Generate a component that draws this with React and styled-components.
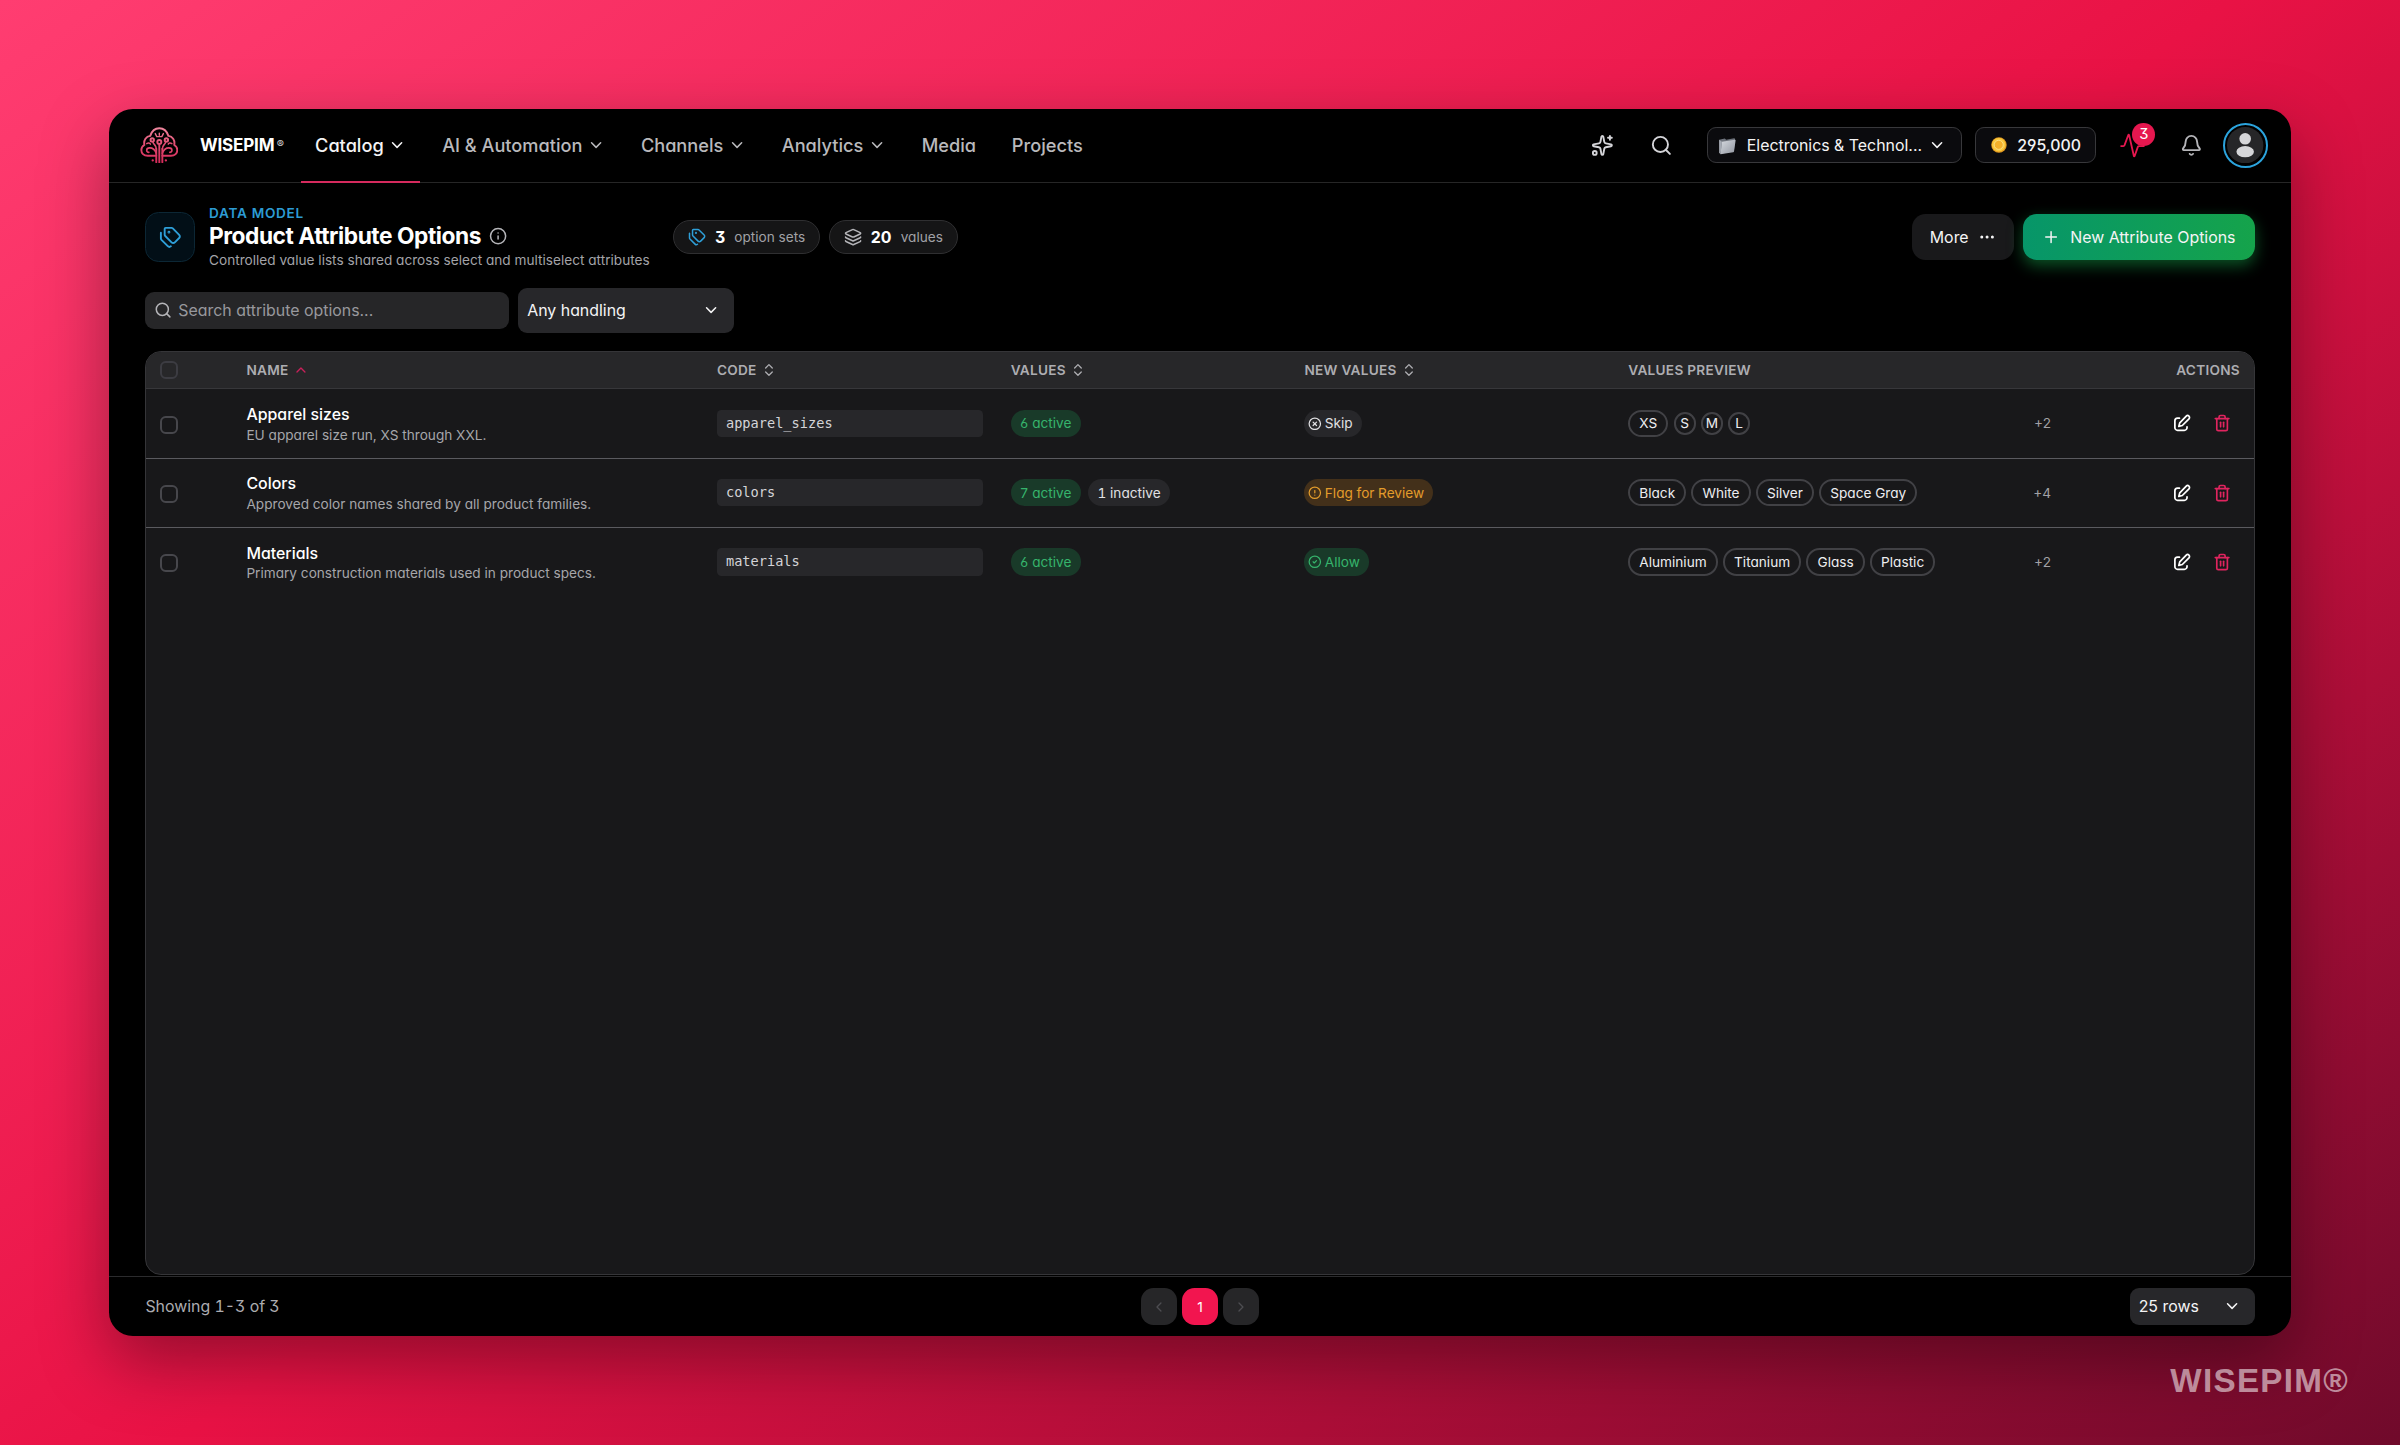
import React from "react";
import styled, { createGlobalStyle, css } from "styled-components";
import {
  Bell,
  ChevronDown,
  ChevronLeft,
  ChevronRight,
  ChevronUp,
  ChevronsUpDown,
  CircleAlert,
  CircleCheck,
  CircleX,
  Ellipsis,
  Info,
  Layers,
  Plus,
  Search,
  Sparkles,
  Tags,
  Trash2,
} from "lucide-react";

const GlobalStyle = createGlobalStyle`
  *, *::before, *::after { box-sizing: border-box; }
  body {
    margin: 0;
    font-family: Inter, "Liberation Sans", sans-serif;
    font-feature-settings: "cv03", "cv04", "cv09", "cv11";
    -webkit-font-smoothing: antialiased;
  }
`;

const sans = css`
  font-family: inherit;
  font-feature-settings: inherit;
`;

const Backdrop = styled.div`
  position: relative;
  display: flex;
  align-items: center;
  justify-content: center;
  width: 100vw;
  height: 100vh;
  overflow: hidden;
  background: linear-gradient(145deg, #ff3d71 0%, #e91245 50%, #700a2b 100%);
`;

const Window = styled.div`
  zoom: 1.1364;
  display: flex;
  flex-direction: column;
  width: 1920px;
  height: 1080px;
  border-radius: 21px;
  overflow: hidden;
  background: #000;
  color: #fafafa;
  box-shadow: 0 22px 60px rgba(0, 0, 0, 0.36);
`;

const Watermark = styled.div`
  position: absolute;
  right: 51px;
  bottom: 45px;
  font: 700 33.2px/38px "Liberation Sans", sans-serif;
  letter-spacing: 1.3px;
  color: rgba(255, 255, 255, 0.55);
`;

/* top bar */
const TopBar = styled.header`
  display: flex;
  align-items: center;
  height: 65px;
  padding: 0 20px 0 27px;
  border-bottom: 1px solid #262626;
  flex: none;
`;

const Brand = styled.div`
  display: flex;
  align-items: center;
  width: 142.3px;
  padding-bottom: 1px;
  color: #fff;
  svg { margin-right: 19px; flex: none; }
`;

const BrandName = styled.span`
  font-size: 15px;
  font-weight: 700;
  letter-spacing: -0.15px;
`;

const BrandMark = styled.span`
  margin-left: 2px;
  font-size: 9.5px;
  color: #d4d4d4;
`;

const Nav = styled.nav`
  display: flex;
  align-self: stretch;
  gap: 7.5px;
`;

const NavItem = styled.a`
  display: flex;
  align-items: center;
  gap: 4px;
  padding: 0 12px 1px;
  margin-bottom: -1px;
  border-bottom: 2px solid ${(p) => (p.$active ? "#d62a5e" : "transparent")};
  border-top: 1px solid transparent;
  font-size: 16px;
  font-weight: 450;
  color: ${(p) => (p.$active ? "#f4f4f5" : "#b9b9bc")};
`;

const TopActions = styled.div`
  display: flex;
  align-items: center;
  margin-left: auto;
`;

const IconButton = styled.button`
  ${sans}
  display: flex;
  align-items: center;
  justify-content: center;
  width: 40px;
  height: 40px;
  padding: 0;
  margin-right: ${(p) => p.$after ?? 0}px;
  border: 0;
  background: none;
  color: ${(p) => p.$tone ?? "#d4d4d8"};
  position: relative;
`;

const TopPill = styled.button`
  ${sans}
  display: flex;
  align-items: center;
  width: ${(p) => p.$width}px;
  height: 32px;
  margin-right: ${(p) => p.$after}px;
  padding: 0 ${(p) => p.$pad}px;
  gap: ${(p) => p.$gap}px;
  border: 1px solid #38383b;
  border-radius: 8px;
  background: #0b0b0e;
  color: #f4f4f5;
  font-size: 14px;
  font-weight: ${(p) => p.$weight ?? 400};
  white-space: nowrap;
  svg { flex: none; }
  svg:last-child { margin-left: -3.5px; }
  svg:first-child { margin-left: 0; }
`;

const CountBadge = styled.span`
  position: absolute;
  top: 0.5px;
  left: 15.5px;
  width: 20px;
  height: 20px;
  border-radius: 50%;
  background: #e6174f;
  color: #fff;
  font-size: 13px;
  line-height: 20px;
  text-align: center;
`;

const AvatarRing = styled.div`
  display: flex;
  align-items: center;
  justify-content: center;
  width: 40px;
  height: 40px;
  border: 2px solid #2ba3dc;
  border-radius: 50%;
`;

/* page heading */
const Page = styled.main`
  display: flex;
  flex-direction: column;
  flex: 1;
  min-height: 0;
  padding: 19.4px 32px 1px;
`;

const Heading = styled.section`
  display: flex;
  align-items: center;
  height: 57px;
`;

const HeadingIcon = styled.div`
  display: flex;
  align-items: center;
  justify-content: center;
  width: 44px;
  height: 44px;
  margin-right: 12px;
  border: 1px solid #0c2735;
  border-radius: 12px;
  background: #020f17;
  color: #2e9fd8;
`;

const HeadingText = styled.div`
  display: flex;
  flex-direction: column;
  margin-top: -1px;
  margin-right: 20.6px;
`;

const Eyebrow = styled.span`
  font-size: 12px;
  font-weight: 600;
  line-height: 16px;
  letter-spacing: 0.05em;
  color: #2c9bd3;
`;

const Title = styled.h1`
  display: flex;
  align-items: center;
  gap: 7px;
  margin: 0;
  font-size: 20px;
  font-weight: 700;
  line-height: 25px;
  letter-spacing: -0.02em;
  color: #fff;
  svg { color: #b4b4b8; }
`;

const Subtitle = styled.span`
  font-size: 12px;
  line-height: 16px;
  color: #a3a3a8;
`;

const Stat = styled.div`
  display: flex;
  align-items: center;
  gap: 8px;
  height: 30px;
  margin-right: 8px;
  padding: 0 12px;
  border: 1px solid #2f2f31;
  border-radius: 15px;
  background: #151516;
  font-size: 12px;
  color: #a1a1a6;
  svg { color: ${(p) => p.$tone}; }
  b { font-size: 14px; font-weight: 700; color: #fff; }
`;

const HeadingActions = styled.div`
  display: flex;
  gap: 8px;
  margin-left: auto;
`;

const Button = styled.button`
  ${sans}
  display: flex;
  align-items: center;
  justify-content: center;
  width: ${(p) => (p.$primary ? 204 : 89.5)}px;
  height: 40px;
  padding: 0;
  border: 0;
  border-radius: 12px;
  font-size: 14px;
  font-weight: 420;
  color: #f4f4f5;
  background: ${(p) => (p.$primary ? "linear-gradient(90deg, #079669, #15a34b)" : "#19191b")};
  box-shadow: ${(p) => (p.$primary ? "0 5px 13px rgba(22, 163, 74, 0.5)" : "none")};
  gap: ${(p) => (p.$primary ? 9 : 8)}px;
`;

/* filters */
const Filters = styled.section`
  display: flex;
  align-items: center;
  gap: 8px;
  margin: 16px 0 15.6px;
`;

const SearchBox = styled.div`
  display: flex;
  align-items: center;
  gap: 5.5px;
  width: 320px;
  height: 32px;
  padding: 0 7.5px;
  border-radius: 8px;
  background: #262628;
  font-size: 14px;
  color: #98989d;
  svg { color: #b4b4b8; }
`;

const Select = styled.div`
  display: flex;
  align-items: center;
  justify-content: space-between;
  width: ${(p) => p.$width}px;
  height: ${(p) => p.$height}px;
  padding: 0 12px 0 8px;
  border-radius: 8px;
  background: #27272a;
  font-size: 14px;
  color: #f4f4f5;
`;

/* table */
const Table = styled.section`
  flex: 1;
  border: 1px solid #353538;
  border-radius: 14px;
  overflow: hidden;
  background: #18181a;
`;

const columns = css`
  display: grid;
  grid-template-columns: 76px 414px 258.5px 258.5px 285px 396px 1fr;
  align-items: center;
`;

const HeadRow = styled.div`
  ${columns}
  height: 33px;
  background: #272729;
  border-bottom: 1px solid #37373a;
  font-size: 12px;
  font-weight: 600;
  letter-spacing: 0.02em;
  color: #adadb1;
`;

const Row = styled.div`
  ${columns}
  height: 61px;
  border-bottom: 1px solid ${(p) => (p.$last ? "transparent" : "#5a5a5f")};
`;

const Cell = styled.div`
  display: flex;
  align-items: center;
  justify-content: ${(p) => (p.$end ? "flex-end" : "flex-start")};
  gap: ${(p) => p.$gap ?? 4}px;
  padding: 0 12px;
  min-width: 0;
  white-space: nowrap;
`;

const Checkbox = styled.span`
  width: 16px;
  height: 16px;
  margin-top: ${(p) => (p.$muted ? 0 : 2)}px;
  border: 2px solid ${(p) => (p.$muted ? "#3c3c42" : "#47474c")};
  border-radius: 5px;
`;

const NameBlock = styled.div`
  display: flex;
  flex-direction: column;
  padding-top: 1px;
`;

const Name = styled.span`
  font-size: 14px;
  font-weight: 500;
  line-height: 19px;
  color: #fff;
`;

const Description = styled.span`
  font-size: 12px;
  line-height: 16px;
  color: #a6a6aa;
`;

const Code = styled.code`
  flex: 1;
  height: 24px;
  padding: 0 8px;
  border-radius: 4px;
  background: #27272a;
  font-family: "DejaVu Sans Mono", "Liberation Mono", monospace;
  font-size: 12px;
  line-height: 24px;
  color: #d4d4d8;
`;

const tones = {
  green: ["#193a29", "#36b46c"],
  amber: ["#43301a", "#e39c2b"],
  gray: ["#27272a", "#e0e0e3"],
};

const Badge = styled.span`
  display: inline-flex;
  align-items: center;
  gap: 2.5px;
  height: 24px;
  padding: 0 8px 0 ${(p) => (p.$icon ? 3.5 : 8)}px;
  border-radius: 12px;
  font-size: 12px;
  font-weight: 430;
  font-variant-numeric: tabular-nums;
  background: ${(p) => tones[p.$tone][0]};
  color: ${(p) => tones[p.$tone][1]};
`;

const TagList = styled.div`
  display: flex;
  align-items: center;
  gap: 4.6px;
  flex: 1;
`;

const Tag = styled.span`
  display: inline-flex;
  align-items: center;
  justify-content: center;
  min-width: ${(p) => (p.$round ? 19.4 : 0)}px;
  height: ${(p) => (p.$round ? 20 : 24)}px;
  padding: 0 ${(p) => (p.$round ? 0 : 8)}px;
  border: 2px solid #414145;
  border-radius: 12px;
  font-size: 12px;
  font-weight: 430;
  color: #ededf0;
`;

const MoreCount = styled.span`
  font-size: 12px;
  color: #a1a1a5;
`;

const RowActions = styled.div`
  display: flex;
  align-items: center;
  gap: 19px;
  margin-right: 8px;
  color: #fff;
`;

const DeleteIcon = styled(Trash2)`
  color: #e0245f;
`;

/* footer */
const Footer = styled.footer`
  display: grid;
  grid-template-columns: 1fr auto 1fr;
  align-items: center;
  height: 53px;
  padding: 0 32px;
  border-top: 1px solid #2b2b2d;
`;

const Range = styled.span`
  font-size: 14px;
  color: #acacb0;
  font-variant-numeric: tabular-nums;
`;

const Pager = styled.div`
  display: flex;
  gap: 4px;
`;

const PageButton = styled.button`
  ${sans}
  display: flex;
  align-items: center;
  justify-content: center;
  width: 32px;
  height: 32px;
  padding: 0;
  border: 0;
  border-radius: 11px;
  font-size: 12px;
  background: ${(p) => (p.$active ? "#f2154f" : "#262628")};
  color: ${(p) => (p.$active ? "#fff" : "#4d4d51")};
`;

const FooterEnd = styled.div`
  display: flex;
  justify-content: flex-end;
`;

/* drawings */
const Logo = () => (
  <svg width="34" height="32" viewBox="0 0 38 36" fill="none" stroke="url(#brand)" strokeWidth="1.9" strokeLinecap="round" strokeLinejoin="round">
    <defs>
      <linearGradient id="brand" x1="0" y1="0" x2="0" y2="36" gradientUnits="userSpaceOnUse">
        <stop offset="0" stopColor="#f08aa0" />
        <stop offset="0.5" stopColor="#e04a70" />
        <stop offset="1" stopColor="#d62a5a" />
      </linearGradient>
    </defs>
    <path d="M16 28.5H7.5C3.5 28.5 1.2 25.8 1.2 22.8c0-2.300 1.200-4 3-5C3.300 13 6 9.300 10 8.800 11.600 4 15 1.300 19 1.300s7.400 2.700 9 7.500c4 .5 6.700 4.200 5.800 9 1.800 1 3 2.700 3 5 0 3-2.300 5.700-6.300 5.700H22" />
    <path d="M19 17v18.500M16 21.500V35M22 21.500V35" />
    <circle cx="19" cy="14.800" r="2" />
    <circle cx="12" cy="12.800" r="1.700" />
    <circle cx="26" cy="12.800" r="1.700" />
    <path d="M12.600 14.700c.6 3 3.400 3 3.400 7M25.400 14.700c-.6 3-3.400 3-3.400 7" strokeWidth="1.600" />
    <path d="M16 26c-1.500-4-4-5.300-6.500-5.300-2 0-3 1.200-3 2.400s1 2 2.200 2M22 26c1.500-4 4-5.300 6.500-5.300 2 0 3 1.200 3 2.400s-1 2-2.200 2" strokeWidth="1.600" />
    <path d="M6.500 16.500c1.500-1 3-.8 3.700.5M31.500 16.500c-1.500-1-3-.8-3.700.5M15 6.500l1.500 3h5l1.500-3M19 6.200v2" strokeWidth="1.400" />
    <path d="M12.500 33v.1M25.500 33v.1" strokeWidth="2.300" />
  </svg>
);

const FolderIcon = () => (
  <svg width="16" height="17" viewBox="0 0 16 17">
    <defs>
      <linearGradient id="folder" x1="0" y1="0" x2="1" y2="1">
        <stop offset="0" stopColor="#d6dae0" />
        <stop offset="1" stopColor="#9196a0" />
      </linearGradient>
    </defs>
    <path d="M1 3.200 6 2.200l1.200 1 7-1.200c.5 0 .8.300.8.800l-1 10.500L2 15.800z" fill="#6d727b" />
    <path d="M3.500 5 14.800 3.300c.5 0 .8.200.7.700l-1.400 9.600c-.1.400-.3.600-.7.700L2.200 16z" fill="url(#folder)" />
    <path d="M1 3.200v11.600l1.200 1.200L3.500 5z" fill="#a4a9b2" />
  </svg>
);

const CoinIcon = () => (
  <svg width="14" height="14" viewBox="0 0 14 14">
    <circle cx="7" cy="7" r="6.800" fill="#e39a1f" />
    <circle cx="6.800" cy="6.800" r="6" fill="#f8c83d" />
    <circle cx="6.800" cy="6.900" r="4" fill="#f3b02a" stroke="#fbe08a" strokeWidth="0.800" />
  </svg>
);

const PulseSvg = styled.svg`
  flex: none;
  margin-right: 9px;
`;

const PulseIcon = () => (
  <PulseSvg width="22" height="22" viewBox="0 0 22 22" fill="none" stroke="#e6174f" strokeWidth="1.600" strokeLinecap="round" strokeLinejoin="round">
    <path d="M1 11.500h2c.5 0 .8-.3 1-.8L7.300 1.800c.2-.5.600-.5.700 0l4.200 18.400c.1.500.5.500.7 0l2.800-8c.2-.5.500-.7 1-.7H21" />
  </PulseSvg>
);

const EditIcon = () => (
  <svg width="16" height="16" viewBox="0 0 24 24" fill="none" stroke="currentColor" strokeWidth="2.300" strokeLinecap="round" strokeLinejoin="round">
    <path d="M8.500 5.500H6A3.500 3.500 0 0 0 2.500 9v9A3.500 3.500 0 0 0 6 21.500h9a3.500 3.500 0 0 0 3.500-3.500v-1" />
    <path d="M17.500 2.800a2.500 2.500 0 0 1 3.600 3.500L12.300 15.200l-4.600 1.200 1.200-4.700z" />
  </svg>
);

const PersonIcon = () => (
  <svg width="32" height="32" viewBox="0 0 32 32">
    <circle cx="16" cy="16" r="16" fill="#262628" />
    <circle cx="16" cy="10.400" r="5.100" fill="#d6d6d8" />
    <ellipse cx="16" cy="21.700" rx="7.700" ry="5" fill="#d6d6d8" />
  </svg>
);

const navItems = [
  { label: "Catalog", menu: true, active: true },
  { label: "AI & Automation", menu: true },
  { label: "Channels", menu: true },
  { label: "Analytics", menu: true },
  { label: "Media" },
  { label: "Projects" },
];

const rows = [
  {
    name: "Apparel sizes",
    description: "EU apparel size run, XS through XXL.",
    code: "apparel_sizes",
    active: 6,
    handling: { label: "Skip", tone: "gray", Icon: CircleX },
    preview: ["XS", "S", "M", "L"],
    more: 2,
  },
  {
    name: "Colors",
    description: "Approved color names shared by all product families.",
    code: "colors",
    active: 7,
    inactive: 1,
    handling: { label: "Flag for Review", tone: "amber", Icon: CircleAlert },
    preview: ["Black", "White", "Silver", "Space Gray"],
    more: 4,
  },
  {
    name: "Materials",
    description: "Primary construction materials used in product specs.",
    code: "materials",
    active: 6,
    handling: { label: "Allow", tone: "green", Icon: CircleCheck },
    preview: ["Aluminium", "Titanium", "Glass", "Plastic"],
    more: 2,
  },
];

function OptionRow({ row, last }) {
  const { Icon, label, tone } = row.handling;
  return (
    <Row $last={last}>
      <Cell><Checkbox /></Cell>
      <Cell>
        <NameBlock>
          <Name>{row.name}</Name>
          <Description>{row.description}</Description>
        </NameBlock>
      </Cell>
      <Cell><Code>{row.code}</Code></Cell>
      <Cell $gap={7}>
        <Badge $tone="green">{row.active} active</Badge>
        {row.inactive && <Badge $tone="gray">{row.inactive} inactive</Badge>}
      </Cell>
      <Cell>
        <Badge $tone={tone} $icon><Icon size={12} strokeWidth={2.2} />{label}</Badge>
      </Cell>
      <Cell>
        <TagList>
          {row.preview.map((value) => (
            <Tag key={value} $round={value.length === 1}>{value}</Tag>
          ))}
        </TagList>
        <MoreCount>+{row.more}</MoreCount>
      </Cell>
      <Cell $end>
        <RowActions>
          <EditIcon />
          <DeleteIcon size={16} strokeWidth={2.2} />
        </RowActions>
      </Cell>
    </Row>
  );
}

export default function App() {
  return (
    <Backdrop>
      <GlobalStyle />
      <Window>
        <TopBar>
          <Brand>
            <Logo />
            <BrandName>WISEPIM</BrandName>
            <BrandMark>®</BrandMark>
          </Brand>
          <Nav>
            {navItems.map(({ label, menu, active }) => (
              <NavItem key={label} $active={active}>
                {label}
                {menu && <ChevronDown size={16} />}
              </NavItem>
            ))}
          </Nav>
          <TopActions>
            <IconButton $after={12}><Sparkles size={20} /></IconButton>
            <IconButton $after={20.5}><Search size={20} /></IconButton>
            <TopPill $width={224} $after={12} $pad={9} $gap={9}>
              <FolderIcon />
              Electronics & Technol...
              <ChevronDown size={16} />
            </TopPill>
            <TopPill $width={106} $after={16.8} $pad={13} $gap={9} $weight={450}>
              <CoinIcon />
              295,000
            </TopPill>
            <IconButton $after={7}>
              <PulseIcon />
              <CountBadge>3</CountBadge>
            </IconButton>
            <IconButton $after={8} $tone="#b4b4b8"><Bell size={20} /></IconButton>
            <AvatarRing><PersonIcon /></AvatarRing>
          </TopActions>
        </TopBar>

        <Page>
          <Heading>
            <HeadingIcon><Tags size={20} /></HeadingIcon>
            <HeadingText>
              <Eyebrow>DATA MODEL</Eyebrow>
              <Title>Product Attribute Options <Info size={16} /></Title>
              <Subtitle>Controlled value lists shared across select and multiselect attributes</Subtitle>
            </HeadingText>
            <Stat $tone="#2e9fd8"><Tags size={16} /><b>3</b>option sets</Stat>
            <Stat $tone="#b4b4b8"><Layers size={16} /><b>20</b>values</Stat>
            <HeadingActions>
              <Button>More <Ellipsis size={16} /></Button>
              <Button $primary><Plus size={16} />New Attribute Options</Button>
            </HeadingActions>
          </Heading>

          <Filters>
            <SearchBox><Search size={16} />Search attribute options...</SearchBox>
            <Select $width={190} $height={40}>Any handling <ChevronDown size={16} /></Select>
          </Filters>

          <Table>
            <HeadRow>
              <Cell><Checkbox $muted /></Cell>
              <Cell>NAME <ChevronUp size={14} color="#c9205a" /></Cell>
              <Cell>CODE <ChevronsUpDown size={14} /></Cell>
              <Cell>VALUES <ChevronsUpDown size={14} /></Cell>
              <Cell>NEW VALUES <ChevronsUpDown size={14} /></Cell>
              <Cell>VALUES PREVIEW</Cell>
              <Cell $end>ACTIONS</Cell>
            </HeadRow>
            {rows.map((row, i) => (
              <OptionRow key={row.code} row={row} last={i === rows.length - 1} />
            ))}
          </Table>
        </Page>

        <Footer>
          <Range>Showing 1-3 of 3</Range>
          <Pager>
            <PageButton><ChevronLeft size={14} /></PageButton>
            <PageButton $active>1</PageButton>
            <PageButton><ChevronRight size={14} /></PageButton>
          </Pager>
          <FooterEnd>
            <Select $width={110} $height={32}>25 rows <ChevronDown size={16} /></Select>
          </FooterEnd>
        </Footer>
      </Window>
      <Watermark>WISEPIM®</Watermark>
    </Backdrop>
  );
}
